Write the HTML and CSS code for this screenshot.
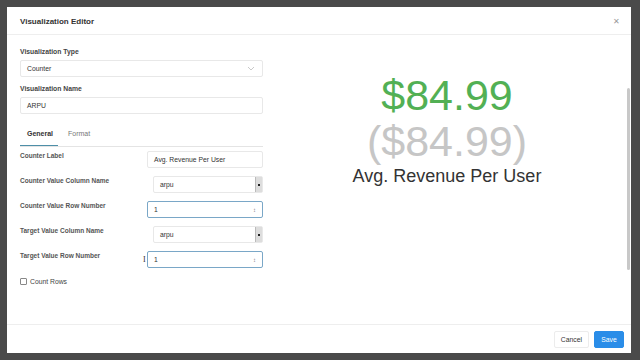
FILE: index.html
```html
<!DOCTYPE html>
<html lang="en">
<head>
  <meta charset="UTF-8">
  <title>Visualization Editor</title>
  <link rel="stylesheet" href="styles.css">
</head>
<body>
  <div class="modal">
    <div class="modal-header">
      <span class="title">Visualization Editor</span>
      <span class="close">&#x2715;</span>
    </div>

    <div class="modal-body">
      <div class="editor">
        <label class="field-label">Visualization Type</label>
        <div class="control select">
          <span>Counter</span>
          <svg class="chev" width="8" height="5" viewBox="0 0 8 5"><path d="M1 1l3 3 3-3" fill="none" stroke="#bbb" stroke-width="0.8"/></svg>
        </div>

        <label class="field-label">Visualization Name</label>
        <div class="control">ARPU</div>

        <div class="tabs">
          <span class="tab active">General</span>
          <span class="tab">Format</span>
        </div>

        <div class="row">
          <span class="row-label">Counter Label</span>
          <div class="control small">Avg. Revenue Per User</div>
        </div>
        <div class="row">
          <span class="row-label">Counter Value Column Name</span>
          <div class="control small native"><span>arpu</span><span class="arrow"></span></div>
        </div>
        <div class="row">
          <span class="row-label">Counter Value Row Number</span>
          <div class="control small focus"><span>1</span><span class="spin">&#x2195;</span></div>
        </div>
        <div class="row">
          <span class="row-label">Target Value Column Name</span>
          <div class="control small native"><span>arpu</span><span class="arrow"></span></div>
        </div>
        <div class="row">
          <span class="row-label">Target Value Row Number</span>
          <div class="control small focus"><span class="cursor">I</span><span>1</span><span class="spin">&#x2195;</span></div>
        </div>

        <label class="check"><span class="box"></span>Count Rows</label>
      </div>

      <div class="preview">
        <div class="value">$84.99</div>
        <div class="target">($84.99)</div>
        <div class="caption">Avg. Revenue Per User</div>
      </div>
      <div class="scrollbar"></div>
    </div>

    <div class="modal-footer">
      <button class="btn">Cancel</button>
      <button class="btn primary">Save</button>
    </div>
  </div>
</body>
</html>
```

FILE: styles.css
```css
body { margin: 0; background: #4a4a4a; font-family: "Liberation Sans", Arial, sans-serif; color: #333; }
.modal { margin: 7px; width: 624px; height: 346px; background: #fff; display: flex; flex-direction: column; }

.modal-header { height: 27px; border-bottom: 1px solid #eee; display: flex; align-items: center; justify-content: space-between; padding: 1px 11px 0 13px; box-sizing: border-box; height: 28px; }
.title { font-size: 8px; font-weight: bold; color: #333; }
.close { font-size: 8px; color: #999; }

.modal-body { flex: 1; display: flex; position: relative; }
.editor { width: 243px; padding: 13px 0 0 13px; }
.field-label { display: block; font-size: 6.8px; font-weight: bold; color: #444; margin-bottom: 5px; }
.control { height: 15px; border: 1px solid #e8e8e8; border-radius: 2px; font-size: 6.8px; padding: 0 6px; display: flex; align-items: center; justify-content: space-between; margin-bottom: 8px; }
.chev { margin-right: 1px; }

.tabs { display: flex; border-bottom: 1px solid #e4e4e4; margin-top: 4px; height: 24px; align-items: center; margin-bottom: 4px; }
.tab { font-size: 7px; color: #777; padding: 0 7px; height: 24px; line-height: 24px; box-sizing: border-box; }
.tab.active { color: #333; font-weight: bold; width: 38px; border-bottom: 1px solid #4e8fa8; }
.tab + .tab { padding-left: 10px; }

.row { display: flex; justify-content: space-between; align-items: flex-start; height: 25px; }
.row-label { font-size: 6.5px; font-weight: bold; color: #555; padding-top: 1px; }
.control.small { width: 102px; margin-bottom: 0; position: relative; }
.control.native { padding-right: 0; padding-left: 6px; }
.arrow { width: 6px; height: 15px; background: #ddd; border-left: 1px solid #bbb; position: relative; }
.arrow::after { content: ""; position: absolute; left: 2px; top: 7px; width: 2px; height: 2px; background: #222; }
.control.focus { border-color: #7aa7c7; }
.spin { font-size: 6px; color: #777; }
.cursor { position: absolute; left: -5px; font-size: 8px; color: #333; font-family: "Liberation Serif", serif; }

.check { display: flex; align-items: center; font-size: 6.8px; color: #444; margin-top: 2px; }
.box { width: 5px; height: 5px; border: 1px solid #888; border-radius: 1px; margin-right: 3px; }

.preview { flex: 1; text-align: center; padding-top: 35px; }
.value { font-size: 43px; line-height: 50px; color: #52b054; }
.target { font-size: 43px; line-height: 43px; color: #c6c6c6; }
.caption { font-size: 18px; line-height: 26px; color: #333; }
.scrollbar { position: absolute; right: 1px; top: 53px; width: 3px; height: 182px; background: #c8c8c8; border-radius: 2px; }

.modal-footer { height: 28px; border-top: 1px solid #eee; display: flex; justify-content: flex-end; align-items: center; gap: 5px; padding-right: 7px; }
.btn { height: 17px; font-family: inherit; font-size: 6.8px; border: 1px solid #ececec; background: #fff; color: #333; padding: 0 6px; border-radius: 2px; }
.btn.primary { background: #2a8de8; border-color: #2a8de8; color: #fff; width: 30px; }
```
